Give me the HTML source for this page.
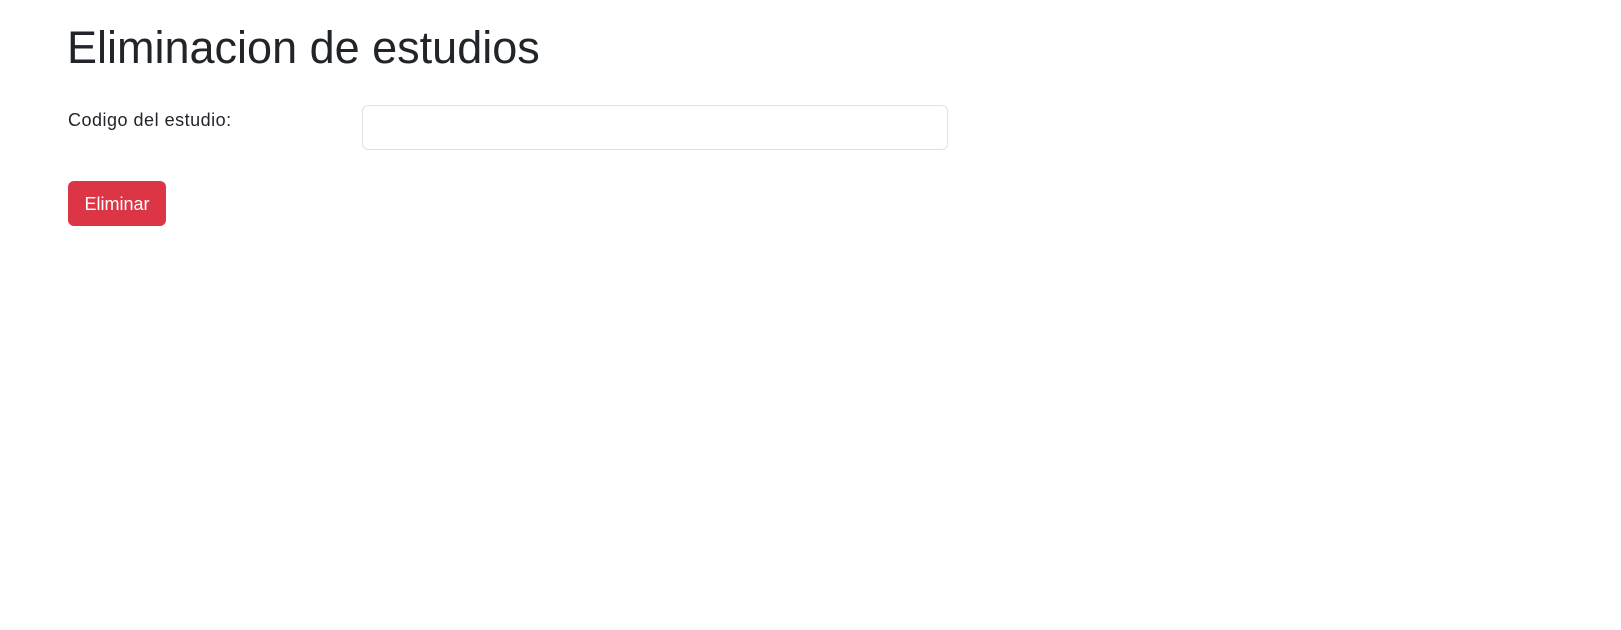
<!DOCTYPE html>
<html><head><meta charset="utf-8"><style>
body{margin:0;background:#fff;font-family:"Liberation Sans",sans-serif;color:#212529;}
h1{position:absolute;left:67px;top:17px;margin:0;font-weight:300;font-size:45px;line-height:62px;}
.lbl{position:absolute;left:68px;top:107px;font-size:18px;line-height:26px;letter-spacing:0.5px;}
.inp{position:absolute;left:362px;top:105px;width:586px;height:45px;border:1px solid #dee2e6;border-radius:6px;box-sizing:border-box;}
.btn{position:absolute;left:68px;top:181px;width:98px;height:45px;background:#dc3545;border-radius:6px;color:#fff;font-size:18px;line-height:47px;text-align:center;}
</style></head><body>
<h1>Eliminacion de estudios</h1>
<div class="lbl">Codigo del estudio:</div>
<div class="inp"></div>
<div class="btn">Eliminar</div>
</body></html>
